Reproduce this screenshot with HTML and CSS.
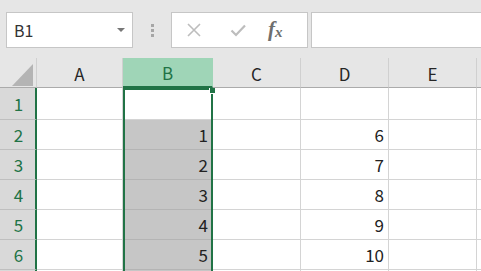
FILE: index.html
```html
<!DOCTYPE html>
<html>
<head>
<meta charset="utf-8">
<link rel="stylesheet" href="styles.css">
</head>
<body>
<div class="app">
  <div class="toolbar">
    <div class="namebox">
      <span class="nb-text">B1</span>
      <span class="nb-arrow"></span>
    </div>
    <div class="grip"><i></i><i></i><i></i></div>
    <div class="fbuttons">
      <svg class="ic" width="16" height="16" viewBox="0 0 16 16"><path d="M2 2 L14 14 M14 2 L2 14" stroke="#bdbdbd" stroke-width="1.6" fill="none"/></svg>
      <svg class="ic" width="16" height="16" viewBox="0 0 16 16"><path d="M1.5 8.5 L6 13 L15 3.5" stroke="#bdbdbd" stroke-width="2.2" fill="none"/></svg>
      <span class="fx">f<sub>x</sub></span>
    </div>
    <div class="formula"></div>
  </div>
  <div class="sheet">
    <div class="grid">
      <div class="corner"><span class="tri"></span></div>
      <div class="ch">A</div>
      <div class="ch sel">B</div>
      <div class="ch">C</div>
      <div class="ch">D</div>
      <div class="ch">E</div>
      <div class="ch"></div>

      <div class="rh r1">1</div><div class="c r1"></div><div class="c r1 active"></div><div class="c r1"></div><div class="c r1"></div><div class="c r1"></div><div class="c r1"></div>
      <div class="rh">2</div><div class="c"></div><div class="c hl">1</div><div class="c"></div><div class="c">6</div><div class="c"></div><div class="c"></div>
      <div class="rh">3</div><div class="c"></div><div class="c hl">2</div><div class="c"></div><div class="c">7</div><div class="c"></div><div class="c"></div>
      <div class="rh">4</div><div class="c"></div><div class="c hl">3</div><div class="c"></div><div class="c">8</div><div class="c"></div><div class="c"></div>
      <div class="rh">5</div><div class="c"></div><div class="c hl">4</div><div class="c"></div><div class="c">9</div><div class="c"></div><div class="c"></div>
      <div class="rh">6</div><div class="c"></div><div class="c hl">5</div><div class="c"></div><div class="c">10</div><div class="c"></div><div class="c"></div>
      <div class="rh"></div><div class="c"></div><div class="c hl"></div><div class="c"></div><div class="c"></div><div class="c"></div><div class="c"></div>
    </div>
    <div class="selection"><span class="handle"></span></div>
  </div>
</div>
</body>
</html>
```
FILE: styles.css
```css
html, body {
  margin: 0;
  padding: 0;
  width: 481px;
  height: 271px;
  overflow: hidden;
  background: #e6e6e6;
  font-family: "Noto Sans CJK JP", "Noto Sans", sans-serif;
}
.app {
  width: 481px;
  height: 271px;
  display: flex;
  flex-direction: column;
}
.toolbar {
  height: 58px;
  box-sizing: border-box;
  padding: 12px 0 0 6px;
  display: flex;
  align-items: flex-start;
}
.namebox {
  width: 127px;
  height: 36px;
  box-sizing: border-box;
  background: #fff;
  border: 1px solid #c6c6c6;
  display: flex;
  align-items: center;
  justify-content: space-between;
  padding: 0 6px 0 7px;
}
.nb-text {
  font-size: 16px;
  color: #333;
  line-height: 1;
}
.nb-arrow {
  width: 0;
  height: 0;
  border-left: 4px solid transparent;
  border-right: 4px solid transparent;
  border-top: 4px solid #777;
  margin-right: 1px;
}
.grip {
  width: 38px;
  height: 36px;
  display: flex;
  flex-direction: column;
  align-items: center;
  justify-content: center;
  gap: 2px;
}
.grip i {
  display: block;
  width: 3px;
  height: 3px;
  background: #a6a6a6;
}
.fbuttons {
  width: 137px;
  height: 36px;
  box-sizing: border-box;
  background: #fff;
  border: 1px solid #c6c6c6;
  display: flex;
  align-items: center;
  padding-left: 14px;
  gap: 28px;
}
.ic { display: block; }
.fx {
  font-family: "Liberation Serif", serif;
  font-style: italic;
  font-weight: bold;
  font-size: 21px;
  line-height: 1;
  color: #6e6e6e;
  margin-left: -6px;
  margin-top: -2px;
}
.fx sub {
  font-size: 15px;
  vertical-align: -1px;
}
.formula {
  margin-left: 3px;
  flex: 1;
  height: 36px;
  box-sizing: border-box;
  background: #fff;
  border: 1px solid #c6c6c6;
  border-right: none;
}
.sheet {
  position: relative;
  flex: 1;
  overflow: hidden;
}
.grid {
  display: grid;
  grid-template-columns: 37px 86px 90px 88px 88px 88px 60px;
  grid-template-rows: 30px 32px 30px 30px 30px 30px 30px 30px;
  background: #fff;
}
.grid > div {
  box-sizing: border-box;
}
.corner {
  background: #e6e6e6;
  border-bottom: 1px solid #ababab;
  border-right: 1px solid #d0d0d0;
  position: relative;
}
.tri {
  position: absolute;
  left: 12px;
  top: 6px;
  width: 0;
  height: 0;
  border-left: 21px solid transparent;
  border-bottom: 22px solid #b4b4b4;
}
.ch {
  background: #e6e6e6;
  border-bottom: 1px solid #ababab;
  border-right: 1px solid #d0d0d0;
  display: flex;
  align-items: center;
  justify-content: center;
  font-size: 17px;
  color: #262626;
  padding-top: 1px;
}
.ch.sel {
  background: #9fd5b7;
  color: #217346;
  border-right-color: #9fd5b7;
  border-bottom: 2px solid #217346;
}
.rh {
  background: #d9d9d9;
  border-right: 2px solid #217346;
  border-bottom: 1px solid #bfbfbf;
  color: #217346;
  font-size: 17px;
  display: flex;
  align-items: center;
  justify-content: center;
  padding-left: 2px;
}
.c {
  border-right: 1px solid #d4d4d4;
  border-bottom: 1px solid #d4d4d4;
  font-size: 17px;
  color: #222;
  display: flex;
  align-items: center;
  justify-content: flex-end;
  padding-right: 4px;
}
.c.hl {
  background: #c6c6c6;
  border-bottom-color: #b4b4b4;
}
.selection {
  position: absolute;
  left: 123px;
  top: 30px;
  width: 90px;
  height: 260px;
  box-sizing: border-box;
  border: 2px solid #217346;
}
.handle {
  position: absolute;
  right: -4px;
  top: -2px;
  width: 5px;
  height: 5px;
  background: #217346;
  border-left: 1px solid #fff;
  border-bottom: 1px solid #fff;
}
```
